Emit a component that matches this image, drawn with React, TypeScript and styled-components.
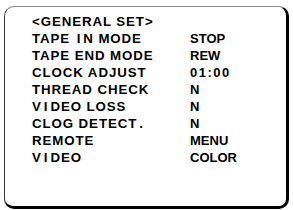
import * as React from 'react';
import styled, { createGlobalStyle } from 'styled-components';

const GlobalStyle = createGlobalStyle`
    html, body {
        margin: 0;
        padding: 0;
        background: #ffffff;
    }
`;

const Screen = styled.div`
    width: 293px;
    height: 210px;
    padding: 6px 4px 1px 4px;
    box-sizing: border-box;
    background: #ffffff;
`;

const Panel = styled.div`
    box-sizing: border-box;
    width: 285px;
    height: 203px;
    border-top: 1px solid #8a8a8a;
    border-left: 1px solid #3a3a3a;
    border-right: 3px solid #000000;
    border-bottom: 3px solid #000000;
    border-radius: 10px;
    padding: 6px 0 0 27px;
`;

const Menu = styled.div`
    display: grid;
    grid-template-columns: 158px auto;
    font-family: 'Liberation Sans', Arial, sans-serif;
    font-weight: bold;
    color: #000000;
    line-height: 17px;
`;

const Label = styled.div<{ $title?: boolean }>`
    white-space: pre;
    font-size: 13.3px;
    letter-spacing: 0.9px;
    grid-column: ${(p) => (p.$title ? '1 / span 2' : 'auto')};
`;

// the OSD font gives "I" and "." a full cell of their own
const Narrow = styled.span`
    margin: 0 2px;
`;

const Value = styled.div<{ $spaced?: boolean }>`
    white-space: pre;
    font-size: 13px;
    letter-spacing: ${(p) => (p.$spaced ? '1.5px' : '0')};
`;

const rows: [string, string][] = [
    ['TAPE IN MODE', 'STOP'],
    ['TAPE END MODE', 'REW'],
    ['CLOCK ADJUST', '01:00'],
    ['THREAD CHECK', 'N'],
    ['VIDEO LOSS', 'N'],
    ['CLOG DETECT.', 'N'],
    ['REMOTE', 'MENU'],
    ['VIDEO', 'COLOR'],
];

const osd = (text: string) =>
    text.split(/([I.])/).map((part, i) =>
        part === 'I' || part === '.' ? <Narrow key={i}>{part}</Narrow> : part
    );

export default function App() {
    return (
        <>
            <GlobalStyle />
            <Screen>
                <Panel>
                    <Menu>
                        <Label $title>{'<GENERAL SET>'}</Label>
                        {rows.map(([label, value]) => (
                            <React.Fragment key={label}>
                                <Label>{osd(label)}</Label>
                                <Value $spaced={value === '01:00'}>{value}</Value>
                            </React.Fragment>
                        ))}
                    </Menu>
                </Panel>
            </Screen>
        </>
    );
}
